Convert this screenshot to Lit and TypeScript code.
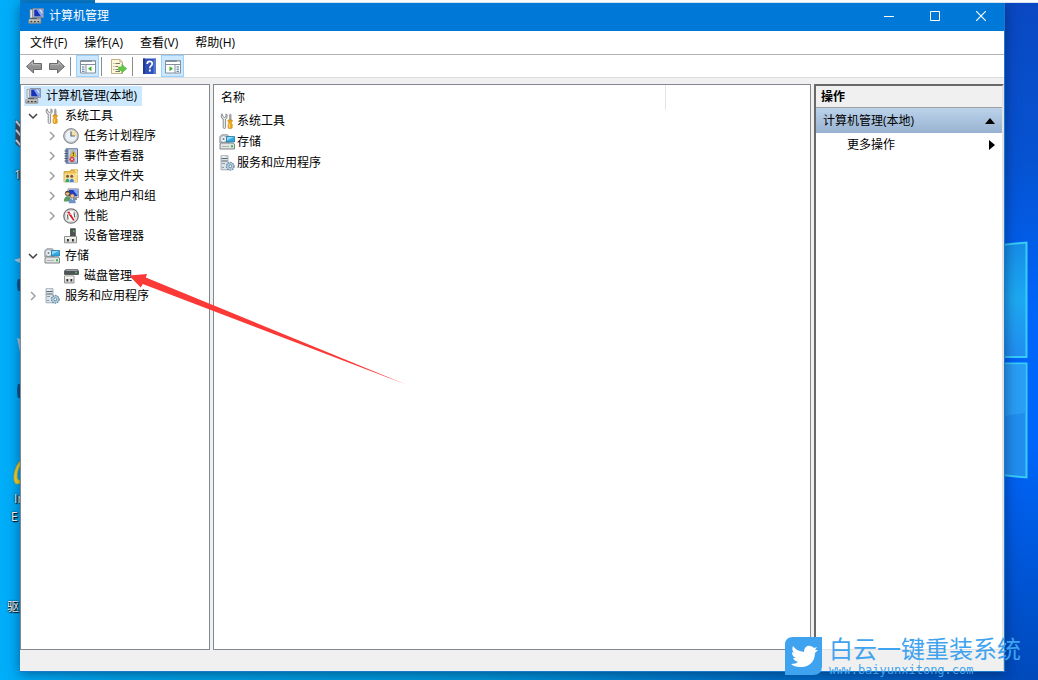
import { LitElement, html, css, svg, nothing, TemplateResult } from "lit";
import { customElement, property } from "lit/decorators.js";

const monitor = svg`
  <path d="M5 .5h10.500v9H5z" fill="#d9dce0" stroke="#7d838b" stroke-width=".8"/>
  <path d="M6.200 1.500h8.200v7H6.200z" fill="#1733b4"/>
  <path d="M8.500 1.500l4.500 7h1.400v-7z" fill="#7fa6f4"/>
  <path d="M11 1.500h2l1.400 2.500v2z" fill="#d4e2ff"/>
  <path d="M8 9.500h5v1.700H8z" fill="#8b9097"/>
  <path d="M2 1.500h2.500v8.500H2z" fill="#e4e5e7" stroke="#8b8f95" stroke-width=".7"/>
  <path d="M3 10h6v1.800H3z" fill="#555b61"/>
  <path d="M.8 11.500h12v3.700h-12z" fill="#b3b3af" stroke="#8a8a88" stroke-width=".8"/>
  <path d="M2.500 13.500h1.700M6 13.500h1.700M9.500 13.500h1.700" stroke="#3d3d3d" stroke-width="1.600"/>
  <path d="M1 12h11.500" stroke="#e6e6e3" stroke-width=".8"/>`;

const tools = svg`
  <path d="M3 .8L2 3l1 2.500L4.200 6v8.500c0 1.300 2.400 1.300 2.400 0V6L8 4.800 8.200 2 7 .8v3l-1.600.7L4 3.500z" fill="#e6e8e9" stroke="#737779" stroke-width=".8"/>
  <path d="M10.500 2l.8-1.200.8 1.200v5h-1.600z" fill="#aab0b4" stroke="#777" stroke-width=".5"/>
  <path d="M9 7h4.200v1.500l-.8 1v.9l.8.800v3.600c0 1-4.200 1-4.200 0v-3.600l.8-.8v-.9l-.8-1z" fill="#f0a91c" stroke="#c47e0c" stroke-width=".6"/>
  <path d="M10.300 11v3.500" stroke="#ffe08a"/>`;

const clock = svg`
  <circle cx="8" cy="8" r="7.400" fill="#b9bdc1" stroke="#7f8387" stroke-width=".9"/>
  <circle cx="8" cy="8" r="5.900" fill="#eaf2fb" stroke="#d7dadd"/>
  <path d="M8 8V2.300A5.700 5.700 0 0 1 13.700 8z" fill="#f6dfa3"/>
  <path d="M8 3.500V8h4" fill="none" stroke="#5a6876" stroke-width="1.200"/>`;

const eventLog = svg`
  <path d="M3 .8h11.500v14.400H3z" fill="#c8d4e8" stroke="#5a6c93"/>
  <path d="M3 1h2.500v14H3z" fill="#7487ad"/>
  <path d="M1.500 3h3M1.500 5.500h3M1.500 8h3M1.500 10.500h3M1.500 13h3" stroke="#44506a"/>
  <path d="M7 3h6M7 5h6M7 7h6M7 13.500h6" stroke="#8fa3c6" stroke-width=".7"/>
  <path d="M10.300 2.400L13.600 8.400H7z" fill="#f8cb2d" stroke="#b88a0c" stroke-width=".5"/>
  <path d="M10.300 4.500v2M10.300 7v.8" stroke="#222"/>
  <circle cx="9" cy="11.300" r="2.600" fill="#d4383d"/>
  <path d="M8 10.300l2 2M10 10.300l-2 2" stroke="#fff" stroke-width=".9"/>`;

const sharedFolder = svg`
  <path d="M1 3.500h6l1-1.700h6.500V14H1z" fill="#e9bf51" stroke="#c79a31" stroke-width=".8"/>
  <path d="M1.500 5.500h13V14h-13z" fill="#f7df8e"/>
  <path d="M12 2.500l2 .5v4" fill="none" stroke="#fff3c8"/>
  <circle cx="4.500" cy="8.300" r="1.500" fill="#7a5a3e"/><circle cx="8.700" cy="8.300" r="1.500" fill="#7a5a3e"/>
  <path d="M2 14.500c0-5.500 5-5.500 5 0z" fill="#38a078" stroke="#fff" stroke-width=".5"/>
  <path d="M6.300 14.500c0-5.500 5-5.500 5 0z" fill="#4d83bd" stroke="#fff" stroke-width=".5"/>`;

const users = svg`
  <path d="M5 .8h10.500v8.700H5z" fill="#d6dae0" stroke="#7d838d" stroke-width=".7"/>
  <path d="M6 1.800h8.500v6.500H6z" fill="#1c3fc0"/><path d="M10 1.800h4.500v6z" fill="#83aafa"/>
  <path d="M10 10h4v2h-4z" fill="#8c9096"/>
  <circle cx="4.500" cy="5.500" r="2.200" fill="#e5b98c" stroke="#5c4129" stroke-width=".8"/>
  <path d="M2.300 5c.3-3 4.300-3 4.500 0-2-1-2.500-1-4.500 0z" fill="#5c4129"/>
  <path d="M.8 13.500c0-7 7.200-7 7.200 0z" fill="#5e9b63"/>
  <circle cx="9.300" cy="8" r="2.100" fill="#edc699" stroke="#8c5f2d" stroke-width=".7"/>
  <path d="M5.800 15.300c0-6.800 7-6.800 7 0z" fill="#6b92cb"/>
  <path d="M8.600 10.500H10l-.7 2z" fill="#fff"/>`;

const performance = svg`
  <circle cx="8" cy="8" r="7.200" fill="#f5f5f5" stroke="#747474" stroke-width="1.300"/>
  <circle cx="8" cy="8" r="5.500" fill="#fff" stroke="#bdbdbd" stroke-width=".7"/>
  <path d="M5 11.500l-.5-5M11 4.500l.8 5" fill="none" stroke="#606060" stroke-width="1.200"/>
  <path d="M4.200 4.500l2-1.200L11.500 12l-1.300.8z" fill="#d61e26"/>
  <path d="M5.500 5.500L8 6.500" stroke="#fff" stroke-width=".6"/>`;

const device = svg`
  <path d="M7.500.7h4.800V8H7.500z" fill="#4d5154" stroke="#303335" stroke-width=".7"/>
  <path d="M10 2.300h1.500v2H10z" fill="#49c44d"/>
  <path d="M8.500 7.500h2.500v2H8.500z" fill="#6b6b6b"/>
  <path d="M1.500 8.500h12v6.300h-12z" fill="#dddeda" stroke="#8e908d"/>
  <path d="M2 9h11v1.500H2z" fill="#f6f6f2"/>
  <path d="M4 11h1.800v2.500H4zM9 11h1.800v2.500H9z" fill="#303030"/>`;

const storage = svg`
  <path d="M.8 2.500L3 .7h5.500l1.500 2V9H.8z" fill="#c5cbd0" stroke="#8b9299" stroke-width=".8"/>
  <circle cx="4.500" cy="5" r="3.400" fill="#e9eef0" stroke="#929ba2" stroke-width=".8"/>
  <circle cx="4.500" cy="5" r="1" fill="#77818a"/>
  <path d="M7.500 2.500h8v5.500h-8z" fill="#2fa9e0" stroke="#2777a6" stroke-width=".8"/>
  <path d="M8 3h7L8 6.500z" fill="#8fd6f4"/>
  <path d="M1 10l1.500-1h11.500l1.500 1v5H1z" fill="#e2e3e3" stroke="#727779" stroke-width=".9"/>
  <path d="M3 12.500h7" stroke="#b0b4b6"/><path d="M12 11.300h2v2h-2z" fill="#30bd42"/>`;

const disk = svg`
  <path d="M1.500 3L3 1.500h11.500L15.500 3v3.500h-14z" fill="#4e5355" stroke="#3c3f41" stroke-width=".7"/>
  <path d="M3 2.200h11.500" stroke="#c4c8ca"/><path d="M12 3.800h2v1.500h-2z" fill="#45c64e"/>
  <path d="M1.500 8h9.500v7H1.500z" fill="#dddeda" stroke="#8e908d"/>
  <path d="M2 8.500h8.500v2H2z" fill="#f6f6f2"/>
  <path d="M3.500 11h1.700v2.500H3.500zM7.500 11h1.700v2.500H7.500z" fill="#303030"/>`;

const services = svg`
  <path d="M2 .7h7v14.100H2z" fill="#dbe2e8" stroke="#93a0aa" stroke-width=".8"/>
  <path d="M2.500 3.500h6M2.500 6h6" stroke="#596773"/>
  <path d="M3 2h3" stroke="#fff"/><path d="M3 8.500h3M3 12.500h2" stroke="#8a99a5"/>
  <circle cx="11.300" cy="11.300" r="3.700" fill="#b9d2e5" stroke="#6b8ca6" stroke-width="1.500" stroke-dasharray="1.600 .8"/>
  <circle cx="11.300" cy="11.300" r="2.900" fill="#b4cfe3"/><circle cx="11.300" cy="11.300" r="1.400" fill="#fff" stroke="#547389" stroke-width=".8"/>`;

const back = svg`<path d="M.5 8.500L7.500 2v3.500h8v6h-8V15z" fill="#929292" stroke="#6a6a6a"/><path d="M2.500 8L6.500 4.500v2.300h8" fill="none" stroke="#bcbcbc"/>`;
const forward = svg`<path d="M15.500 8.500L8.500 2v3.500h-8v6h8V15z" fill="#929292" stroke="#6a6a6a"/><path d="M1.700 6.700h8V4.500l3.500 3.300" fill="none" stroke="#bcbcbc"/>`;

const treePane = svg`
  <path d="M.5 2.500h15v12.500H.5z" fill="#fff" stroke="#84909b"/>
  <path d="M1 2.500h14v1.500H1z" fill="#84909b"/><path d="M1 6.500h14" stroke="#84909b"/>
  <path d="M12 3.300h2.500" stroke="#fff" stroke-width=".8"/>
  <path d="M6 7v8" stroke="#84909b"/>
  <path d="M2 9h2.500M2 11.200h2.500M2 13.300h2.500" stroke="#456f9c"/>
  <path d="M11.500 8.300v5L8 10.800z" fill="#3aaf2b"/>`;
const actionPane = svg`
  <path d="M.5 2.500h15v12.500H.5z" fill="#fff" stroke="#84909b"/>
  <path d="M1 2.500h14v1.500H1z" fill="#84909b"/><path d="M1 6.500h14" stroke="#84909b"/>
  <path d="M12 3.300h2.500" stroke="#fff" stroke-width=".8"/>
  <path d="M10 7v8" stroke="#84909b"/>
  <path d="M11.500 9H14M11.500 11.200H14M11.500 13.300H14" stroke="#456f9c"/>
  <path d="M4.500 8.300v5L8 10.800z" fill="#3aaf2b"/>`;
const exportList = svg`
  <path d="M.5 1.500h8.300L11.500 4v11.500H.5z" fill="#fdf7d9" stroke="#b7a678" stroke-width=".9"/>
  <path d="M8.800 1.700V4h2.500" fill="none" stroke="#b7a678" stroke-width=".8"/>
  <path d="M2.500 5.500h.8M4.500 5.500H9M2.500 8.500h.8M4.500 8.500H7M2.500 11.500h.8M4.500 11.500H7M4.500 13.500H9" stroke="#75736c"/>
  <path d="M7.500 9h3.300V6.500l4.900 4.200-4.900 4.200v-2.500H7.500z" fill="#62c84a" stroke="#4bae38" stroke-width=".6"/>`;
const help = svg`
  <path d="M1 .5h13v15.500H1z" fill="#2e50b6"/><path d="M1 .5h2V16H1z" fill="#203b8c"/>
  <path d="M11.500.5H14V16h-2.500z" fill="#5978d3"/>
  <path d="M5.200 6c0-3.500 5-3.200 5-.3 0 2.300-2.400 2.100-2.400 4.500" fill="none" stroke="#fff" stroke-width="1.700"/>
  <path d="M6.900 11.500h1.900v2H6.900z" fill="#fff"/>`;

const iconSet: Record<string, unknown> = {
  monitor, tools, clock, eventLog, sharedFolder, users, performance,
  device, storage, disk, services, back, forward, treePane, actionPane, exportList, help,
};

@customElement("mmc-icon")
class MmcIcon extends LitElement {
  @property() name = "";
  static styles = css`
    :host { display: block; flex: none; width: 16px; height: 16px; }
    .glyph { display: block; width: 100%; height: 100%; }
  `;
  render() {
    return html`<svg class="glyph" viewBox="0 0 16 16" aria-hidden="true">${iconSet[this.name]}</svg>`;
  }
}

interface Node {
  label: string;
  icon: string;
  open?: boolean;
  leaf?: boolean;
  children?: Node[];
}

const tree: Node[] = [
  {
    label: "系统工具", icon: "tools", open: true, children: [
      { label: "任务计划程序", icon: "clock" },
      { label: "事件查看器", icon: "eventLog" },
      { label: "共享文件夹", icon: "sharedFolder" },
      { label: "本地用户和组", icon: "users" },
      { label: "性能", icon: "performance" },
      { label: "设备管理器", icon: "device", leaf: true },
    ],
  },
  { label: "存储", icon: "storage", open: true, children: [{ label: "磁盘管理", icon: "disk", leaf: true }] },
  { label: "服务和应用程序", icon: "services" },
];

@customElement("app-root")
class AppRoot extends LitElement {
  static styles = css`
    * { box-sizing: border-box; }
    :host {
      display: block;
      height: 100vh;
      font: 12px/20px "Open Sans", "Noto Sans CJK SC", sans-serif;
      color: #000;
    }
    button {
      margin: 0; padding: 0; border: 0; background: none;
      font: inherit; color: inherit; text-align: left;
    }
    ul { list-style: none; margin: 0; padding: 0; }
    .desktop {
      position: relative;
      display: flex;
      height: 100%;
      overflow: hidden;
      padding: 3px 33px 8px 20px;
      background: linear-gradient(90deg, #00aefa 0, #00a4e8 12%, #009adb 45%, #0070c8 75%, #0048b8 100%);
    }
    .glow {
      position: absolute; top: 0; right: 0; bottom: 0; width: 34px;
      background: linear-gradient(#0a48c2, #0653d2 24%, #0064f8 45%, #0066fa 65%, #0052cf 88%, #004abb);
    }
    .glow svg { position: absolute; top: 236px; left: 0; }
    .strip { position: absolute; z-index: 1; top: 0; left: 95px; right: 0; height: 3px; background: #fafbfd; border-bottom: 1px solid #d5e2f0; }
    .strip-dark { position: absolute; top: 0; left: 20px; width: 75px; height: 3px; background: #0a80cf; }
    .shortcuts { position: absolute; left: 0; top: 0; width: 20px; height: 100%; overflow: hidden; color: #fff; text-shadow: 1px 1px 1px #000, 0 0 2px #000; }
    .shortcuts svg { position: absolute; left: 0; top: 0; }
    .caption { position: absolute; line-height: 18px; white-space: pre; }
    .cap-ie { left: 11px; top: 490px; }
    .cap-driver { left: 7px; top: 598px; }
    .cap-one { left: 14px; top: 166px; }

    .window {
      position: relative;
      flex: 1; min-width: 0;
      display: flex; flex-direction: column;
      background: #f0f0f0;
      border-right: 1px solid #1979ca;
      border-bottom: 1px solid #1979ca;
      box-shadow: 0 2px 12px rgba(0, 20, 60, .5);
    }
    .titlebar { display: flex; align-items: center; height: 28px; padding: 0 0 3px 8px; background: #0078d7; color: #fff; }
    .title { flex: 1; margin: 0 0 0 5px; font: inherit; }
    .sys { display: grid; place-items: center; width: 46px; height: 25px; }

    .menubar { display: flex; gap: 1px; height: 24px; padding: 2px; background: #fff; border-bottom: 1px solid #b3b3b3; }
    .menu { padding: 0 8px; }
    .toolbar { display: flex; align-items: center; height: 23px; padding-left: 2px; background: #fff; border-bottom: 1px solid #dcdcdc; }
    .tool { display: grid; place-items: center; width: 23px; height: 22px; }
    .tool.on { background: #cce8ff; border: 1px solid #99d1ff; }
    .sep { width: 1px; height: 19px; margin: 0 5px 0 2px; background: #8c8c8c; }

    .panes {
      flex: 1; min-height: 0;
      display: grid;
      grid-template-columns: 190px minmax(0, 1fr) 190px;
      column-gap: 3px;
      padding-top: 6px;
    }
    .pane { background: #fff; border: 1px solid #828790; }
    .tree { padding-top: 1px; white-space: nowrap; overflow: hidden; }
    .root { display: flex; align-items: center; gap: 5px; width: 118px; margin-left: 3px; padding-left: 1px; background: #cce8ff; }
    .node { display: flex; align-items: center; padding-left: 6px; height: 20px; }
    .node .node-icon { margin: 0 5px; }
    .level .level .node { padding-left: 25px; }
    .toggle, .no-toggle { display: grid; place-items: center; width: 12px; height: 20px; }

    .list { width: 100%; border-collapse: collapse; table-layout: fixed; }
    .list th { height: 25px; padding: 0 0 0 7px; font-weight: normal; text-align: left; }
    .list .name-col { width: 451px; border-right: 1px solid #e5e5e5; }
    .list td { height: 21px; padding: 0 0 0 5px; }
    .item { display: flex; align-items: center; gap: 2px; }

    .actions { background: #fff; border-top: 2px solid #696969; border-left: 2px solid #696969; border-right: 2px solid #e3e3e3; border-bottom: 1px solid #e3e3e3; }
    .actions-title { margin: 0; height: 22px; padding-left: 5px; font: inherit; font-weight: bold; line-height: 22px; background: #f0f0f0; border-bottom: 1px solid #a0a0a0; }
    .group, .more { display: flex; align-items: center; justify-content: space-between; width: 100%; height: 25px; padding: 0 7px; }
    .group { background: linear-gradient(#bcd2ea, #98b3d1); }
    .more { height: 23px; padding-left: 31px; }

    .status { display: flex; justify-content: flex-end; height: 21px; }
    .cell { border-left: 1px solid #d0d0d0; width: 134px; height: 19px; margin-top: 1px; }
    .cell.last { width: 85px; border-right: 1px solid #d0d0d0; }

    .arrow { position: absolute; left: 0; top: 0; pointer-events: none; }
    .watermark { position: absolute; right: 12px; bottom: 5px; display: flex; gap: 7px; height: 38px; color: #3fa3ef; }
    .mark-logo { display: block; width: 37px; height: 38px; }
    .mark-name { margin: 0; width: 197px; font-size: 24px; line-height: 24px; font-weight: 400; white-space: nowrap; }
    .mark-url { margin: 2px 0 0; font: 12px/14px "DejaVu Sans Mono", monospace; }
  `;

  private chevron(open: boolean) {
    return open
      ? html`<svg width="10" height="10" viewBox="0 0 10 10"><path d="M1 3l4 4 4-4" fill="none" stroke="#404040" stroke-width="1.500"/></svg>`
      : html`<svg width="10" height="10" viewBox="0 0 10 10"><path d="M3 1l4 4-4 4" fill="none" stroke="#a0a0a0" stroke-width="1.500"/></svg>`;
  }

  private branch(nodes: Node[]): TemplateResult {
    return html`<ul class="level" role="group">
      ${nodes.map((n) => html`
        <li role="treeitem" aria-expanded=${n.open ? "true" : nothing}>
          <div class="node">
            ${n.leaf ? html`<span class="no-toggle"></span>` : html`<button class="toggle" aria-label=${"展开 " + n.label}>${this.chevron(!!n.open)}</button>`}
            <mmc-icon class="node-icon" name=${n.icon}></mmc-icon>
            <button>${n.label}</button>
          </div>
          ${n.children ? this.branch(n.children) : nothing}
        </li>`)}
    </ul>`;
  }

  private tool(icon: string, label: string, on = false) {
    return html`<button class=${on ? "tool on" : "tool"} aria-label=${label}><mmc-icon name=${icon}></mmc-icon></button>`;
  }

  render() {
    return html`
      <div class="desktop">
        <div class="glow">
          <svg width="34" height="250" viewBox="0 0 34 250" aria-hidden="true">
            <defs>
              <linearGradient id="pane" x1="0" y1="0" x2="0" y2="1">
                <stop offset="0" stop-color="#168de8"/><stop offset=".5" stop-color="#1da9f2"/><stop offset="1" stop-color="#218df0"/>
              </linearGradient>
            </defs>
            <path d="M-2 9L22.500 6.500V121H-2z" fill="url(#pane)" stroke="#38ccf8" stroke-width="2"/>
            <path d="M-2 127.500H22.500V241.500L-2 239z" fill="#218eee" stroke="#38ccf8" stroke-width="2"/>
            <path d="M0 128.500H21.500V177L0 180z" fill="#2a9df4"/>
          </svg>
        </div>
        <div class="strip-dark"></div>
        <div class="strip"></div>
        <div class="shortcuts">
          <svg width="20" height="680" viewBox="0 0 20 680" aria-hidden="true">
            <path d="M15.500 119l5 4v25l-5-4z" fill="#3f4f5c"/>
            <path d="M16 121l5 6M16 130l5 6M16 140l5 6" stroke="#dce4e9" stroke-width="2"/>
            <path d="M14 260l6-2v5z" fill="#b8d4e2"/>
            <path d="M18 279q-2 5 0 12h3v-12zM18 384q-2 7 0 14h3v-14z" fill="#08578f"/>
            <path d="M17 338l3 14v-13z" fill="#a4cce0"/>
            <path d="M20 461c-5 5-8 17-5 22 1 2 4 1 5 0v-3c-4 1-3-9 0-14z" fill="#f8d62c" stroke="#b19b27" stroke-width=".6"/>
          </svg>
          <span class="caption cap-one">1</span>
          <span class="caption cap-ie"> In
E</span>
          <span class="caption cap-driver">驱</span>
        </div>

        <main class="window">
          <header class="titlebar">
            <mmc-icon name="monitor"></mmc-icon>
            <h1 class="title">计算机管理</h1>
            <button class="sys" aria-label="最小化"><svg width="10" height="10"><path d="M0 5.500h10" stroke="#fff"/></svg></button>
            <button class="sys" aria-label="最大化"><svg width="10" height="10"><path d="M.5.500h9v9h-9z" fill="none" stroke="#fff"/></svg></button>
            <button class="sys" aria-label="关闭"><svg width="10" height="10"><path d="M0 0l10 10M10 0L0 10" stroke="#fff" stroke-width="1.200"/></svg></button>
          </header>
          <nav class="menubar">
            ${["文件(F)", "操作(A)", "查看(V)", "帮助(H)"].map((m) => html`<button class="menu">${m}</button>`)}
          </nav>
          <div class="toolbar">
            ${this.tool("back", "后退")}${this.tool("forward", "前进")}
            <span class="sep"></span>
            ${this.tool("treePane", "显示/隐藏控制台树", true)}
            <span class="sep"></span>
            ${this.tool("exportList", "导出列表")}
            <span class="sep"></span>
            ${this.tool("help", "帮助")}${this.tool("actionPane", "显示/隐藏操作窗格", true)}
          </div>
          <div class="panes">
            <nav class="pane tree">
              <button class="root"><mmc-icon name="monitor"></mmc-icon>计算机管理(本地)</button>
              ${this.branch(tree)}
            </nav>
            <section class="pane">
              <table class="list">
                <thead><tr><th class="name-col">名称</th><th></th></tr></thead>
                <tbody>
                  ${tree.map((n) => html`<tr><td><div class="item"><mmc-icon name=${n.icon}></mmc-icon>${n.label}</div></td><td></td></tr>`)}
                </tbody>
              </table>
            </section>
            <aside class="actions">
              <h2 class="actions-title">操作</h2>
              <button class="group">计算机管理(本地)<svg width="10" height="6"><path d="M0 6l5-6 5 6z"/></svg></button>
              <button class="more">更多操作<svg width="6" height="10"><path d="M0 0l6 5-6 5z"/></svg></button>
            </aside>
          </div>
          <footer class="status"><span class="cell"></span><span class="cell last"></span></footer>
        </main>

        <svg class="arrow" width="420" height="400" viewBox="0 0 420 400" aria-hidden="true">
          <path d="M129 275.500L147 274l-1.200 3.500L406 384.500 142.700 284l-2 3.500z" fill="#fb3a38"/>
        </svg>
        <div class="watermark">
          <svg class="mark-logo" viewBox="0 0 37 38" aria-hidden="true">
            <path d="M8 0h29v29q0 9-9 9H0V8q0-8 8-8z" fill="#3fa3ef"/>
            <path d="M8 9c3 4 6 5 11 6 0-4 3-7 6-6 2 0 3 1 4 2l3-1-2 3 3 0-3 3c0 9-7 15-15 14-4 0-7-1-9-3 3 0 6-1 7-2-3-1-4-2-5-4h3c-3-1-4-3-4-6l2 1c-2-2-2-5-1-7z" fill="#fff"/>
          </svg>
          <div>
            <p class="mark-name">白云一键重装系统</p>
            <p class="mark-url">www.baiyunxitong.com</p>
          </div>
        </div>
      </div>
    `;
  }
}
